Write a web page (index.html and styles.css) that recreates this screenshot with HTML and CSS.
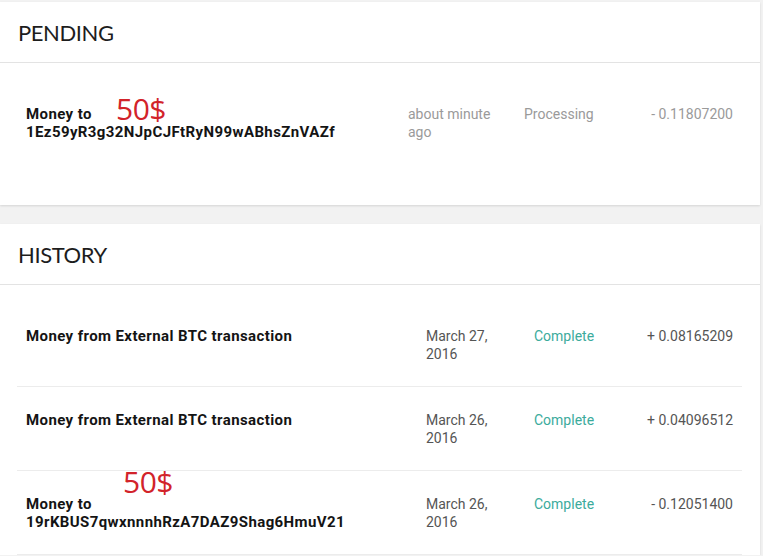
FILE: index.html
```html
<!DOCTYPE html>
<html>
<head>
<meta charset="utf-8">
<link rel="stylesheet" href="styles.css">
</head>
<body>
<div class="page">
  <section class="card pending">
    <h2 class="card-title">PENDING</h2>
    <div class="list">
      <div class="row last">
        <div class="name"><span>Money to</span><span>1Ez59yR3g32NJpCJFtRyN99wABhsZnVAZf</span></div>
        <div class="date muted">about minute ago</div>
        <div class="status muted">Processing</div>
        <div class="amount muted">- 0.11807200</div>
        <span class="note note-pending">50$</span>
      </div>
    </div>
  </section>

  <section class="card history">
    <h2 class="card-title">HISTORY</h2>
    <div class="list">
      <div class="row">
        <div class="name"><span>Money from External BTC transaction</span></div>
        <div class="date">March 27, 2016</div>
        <div class="status ok">Complete</div>
        <div class="amount">+ 0.08165209</div>
      </div>
      <div class="row">
        <div class="name"><span>Money from External BTC transaction</span></div>
        <div class="date">March 26, 2016</div>
        <div class="status ok">Complete</div>
        <div class="amount">+ 0.04096512</div>
      </div>
      <div class="row">
        <div class="name"><span>Money to</span><span>19rKBUS7qwxnnnhRzA7DAZ9Shag6HmuV21</span></div>
        <div class="date">March 26, 2016</div>
        <div class="status ok">Complete</div>
        <div class="amount">- 0.12051400</div>
        <span class="note note-history">50$</span>
      </div>
    </div>
  </section>
</div>
</body>
</html>
```
FILE: styles.css
```css
* { box-sizing: border-box; }
html, body {
  margin: 0;
  padding: 0;
  background: #f2f2f2;
  font-family: Roboto, "Liberation Sans", Arial, sans-serif;
  font-size: 14px;
  line-height: 18px;
  color: #555;
}
.page {
  width: 760px;
  padding-top: 2px;
  display: flex;
  flex-direction: column;
  gap: 19px;
}
.card {
  background: #fff;
  box-shadow: 0 1px 2px rgba(0,0,0,0.12);
}
.card-title {
  margin: 0;
  height: 61px;
  display: flex;
  align-items: center;
  padding: 2px 18px 0;
  border-bottom: 1px solid #e3e3e3;
  font-family: Lato, "Noto Sans", sans-serif;
  font-weight: 400;
  font-size: 22px;
  letter-spacing: -0.4px;
  color: #1d1d1d;
}
.list {
  padding: 18px 18px 0 17px;
}
.pending .list {
  padding-bottom: 40px;
}
.row {
  position: relative;
  height: 84px;
  display: grid;
  align-items: start;
  padding: 24px 9px 0;
  border-bottom: 1px solid #ececec;
}
.row.last { border-bottom: none; }
.pending .row { grid-template-columns: 382px 116px 1fr auto; }
.history .row { grid-template-columns: 400px 108px 1fr auto; }
.name {
  display: flex;
  flex-direction: column;
  font-weight: 700;
  font-size: 15px;
  letter-spacing: 0.4px;
  color: #141414;
}
.pending .date { padding-right: 14px; }
.history .date { padding-right: 18px; }
.muted { color: #9a9a9a; }
.ok { color: #3bab9c; }
.amount { text-align: right; }
.note {
  position: absolute;
  font-family: "Open Sans", "Noto Sans", sans-serif;
  font-size: 30px;
  line-height: 22px;
  color: #d2232a;
  letter-spacing: -0.5px;
}
.note-pending { left: 99px; top: 17px; }
.note-history { left: 106px; top: 0px; }
```
